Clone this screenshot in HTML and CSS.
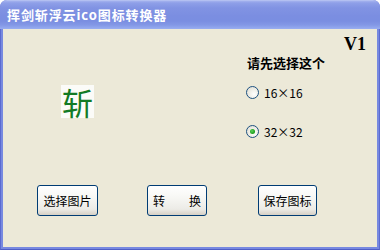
FILE: index.html
```html
<!DOCTYPE html>
<html>
<head>
<meta charset="utf-8">
<link rel="stylesheet" href="styles.css">
</head>
<body>
<div class="window">
  <div class="titlebar">挥剑斩浮云ico图标转换器</div>
  <div class="frame">
    <div class="content">
      <div class="version">V1</div>
      <div class="heading">请先选择这个</div>
      <div class="middle">
        <div class="preview"><span class="glyph">斩</span></div>
        <div class="radios">
          <div class="radio-row"><span class="radio"></span><span class="label">16×16</span></div>
          <div class="radio-row"><span class="radio checked"></span><span class="label">32×32</span></div>
        </div>
      </div>
      <div class="buttons">
        <div class="btn btn-pick">选择图片</div>
        <div class="btn btn-convert"><span>转</span><span>换</span></div>
        <div class="btn btn-save">保存图标</div>
      </div>
    </div>
  </div>
</div>
</body>
</html>
```
FILE: styles.css
```css
html, body {
  margin: 0;
  padding: 0;
  background: #ffffff;
}
body {
  width: 380px;
  height: 250px;
  overflow: hidden;
  font-family: "Noto Sans CJK SC", "Liberation Sans", sans-serif;
}
.window {
  width: 380px;
  height: 250px;
  display: flex;
  flex-direction: column;
  border-radius: 7px 7px 0 0;
  overflow: hidden;
  background: #5b6bd0;
}
.titlebar {
  height: 29px;
  flex: none;
  box-sizing: border-box;
  padding-left: 7px;
  display: flex;
  align-items: center;
  color: #ffffff;
  font-weight: bold;
  font-size: 13px;
  letter-spacing: 0.9px;
  background: linear-gradient(to bottom,
    #c3cdf4 0px, #a3b2ee 1px, #8e9fe8 3px, #8193e3 8px,
    #7b8ee1 16px, #7a8ee1 21px, #8398e6 25px, #93a8ee 28px, #9aaef0 29px);
}
.frame {
  flex: 1;
  display: flex;
  border-left: 1px solid #5b6bd0;
  border-right: 1px solid #5b6bd0;
  border-bottom: 1px solid #4f5ec6;
  background: #7789e0;
  padding: 0 2px 2px 2px;
}
.content {
  flex: 1;
  background: #ece9d8;
  display: flex;
  flex-direction: column;
}
.version {
  padding-top: 6px;
  padding-right: 11px;
  text-align: right;
  font-family: "Liberation Serif", serif;
  font-weight: bold;
  font-size: 18px;
  line-height: 18px;
  color: #000;
}
.heading {
  margin-top: 2px;
  padding-left: 244px;
  font-size: 13px;
  line-height: 16px;
  font-weight: bold;
  color: #000;
}
.middle {
  display: flex;
  margin-top: 14px;
}
.preview {
  margin-left: 58px;
  width: 33px;
  height: 33px;
  background: #fbfbf8;
  display: flex;
  align-items: center;
  justify-content: center;
}
.glyph {
  font-size: 31px;
  line-height: 33px;
  color: #137a24;
}
.radios {
  margin-left: 152px;
  margin-top: 1px;
  display: flex;
  flex-direction: column;
  gap: 26px;
}
.radio-row {
  display: flex;
  align-items: center;
  height: 13px;
  gap: 5px;
}
.radio {
  width: 13px;
  height: 13px;
  box-sizing: border-box;
  border-radius: 50%;
  border: 1px solid #1c5180;
  background: radial-gradient(circle at 65% 65%, #ffffff 0%, #f0efe8 45%, #dcdad0 100%);
  position: relative;
}
.radio.checked::after {
  content: "";
  position: absolute;
  left: 3px;
  top: 3px;
  width: 5px;
  height: 5px;
  border-radius: 50%;
  background: radial-gradient(circle at 40% 40%, #5bd35b 0%, #21a121 60%, #1b8f1b 100%);
}
.label {
  font-size: 12px;
  line-height: 13px;
  color: #000;
}
.buttons {
  display: flex;
  margin-top: 47px;
  padding-left: 34px;
}
.btn {
  height: 31px;
  box-sizing: border-box;
  border: 1px solid #003c74;
  border-radius: 3px;
  background: linear-gradient(to bottom, #ffffff 0%, #f7f7f4 40%, #ecebe6 80%, #d6d0c5 100%);
  display: flex;
  align-items: center;
  justify-content: center;
  font-size: 12px;
  color: #000;
}
.btn-pick { width: 61px; }
.btn-convert { width: 60px; margin-left: 49px; gap: 24px; }
.btn-save { width: 59px; margin-left: 51px; }
```
